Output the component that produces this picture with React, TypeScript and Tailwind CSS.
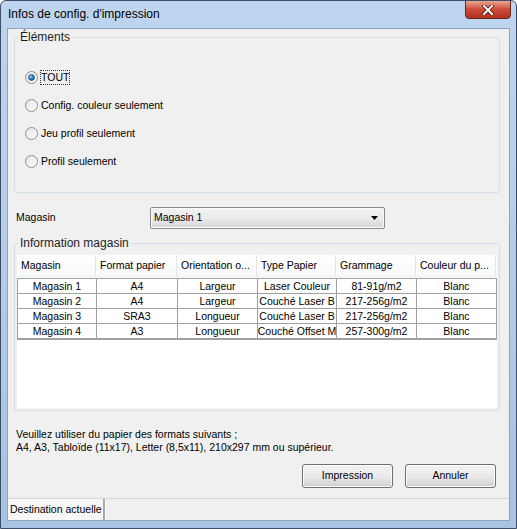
import React from "react";

const font = { fontFamily: '"Liberation Sans", Arial, sans-serif' };

const columns = [
  { label: "Magasin", w: "w-[79px]" },
  { label: "Format papier", w: "w-[81px]" },
  { label: "Orientation o...", w: "w-[80px]" },
  { label: "Type Papier", w: "w-[79px]" },
  { label: "Grammage", w: "w-[80px]" },
  { label: "Couleur du p...", w: "w-[80px]" },
];

const rows = [
  ["Magasin 1", "A4", "Largeur", "Laser Couleur", "81-91g/m2", "Blanc"],
  ["Magasin 2", "A4", "Largeur", "Couché Laser B", "217-256g/m2", "Blanc"],
  ["Magasin 3", "SRA3", "Longueur", "Couché Laser B", "217-256g/m2", "Blanc"],
  ["Magasin 4", "A3", "Longueur", "Couché Offset M", "257-300g/m2", "Blanc"],
];

const options = ["TOUT", "Config. couleur seulement", "Jeu profil seulement", "Profil seulement"];

function Radio({ checked }: { checked?: boolean }) {
  return (
    <span className="w-[13px] h-[13px] rounded-full border border-[#8f8f8f] bg-gradient-to-br from-[#e6e6e6] to-[#fbfbfb] flex items-center justify-center shrink-0">
      {checked && (
        <span className="w-[7px] h-[7px] rounded-full bg-[radial-gradient(circle_at_35%_35%,#9fd3f7,#1c6fb8_60%,#0d4a86)] border border-[#26598a]" />
      )}
    </span>
  );
}

function GroupBox({ title, className, children }: { title: string; className: string; children: React.ReactNode }) {
  return (
    <div className={"relative border border-[#d5dfe5] rounded-[3px] " + className}>
      <span className="absolute -top-[8px] left-[3px] px-[2px] bg-[#f0f0f0] text-[12px] leading-[14px] text-[#1e1e1e]">
        {title}
      </span>
      {children}
    </div>
  );
}

function Button({ label }: { label: string }) {
  return (
    <button className="w-[91px] h-[24px] rounded-[3px] border border-[#707070] bg-gradient-to-b from-[#f2f2f2] via-[#ebebeb] to-[#cfcfcf] text-[10.5px] text-black shadow-[inset_0_0_0_1px_#fcfcfc]">
      {label}
    </button>
  );
}

export default function App() {
  return (
    <div
      className="w-[517px] h-[529px] flex flex-col rounded-t-[6px] border border-[#3c4f66] bg-gradient-to-b from-[#bdd5ee] via-[#b3cde9] to-[#a6c3e4] overflow-hidden"
      style={font}
    >
      {/* title bar */}
      <div className="h-[27px] flex items-start relative shrink-0">
        <span className="ml-[7px] mt-[6px] text-[12px] leading-[14px] text-black">Infos de config. d'impression</span>
        <div className="absolute top-[-1px] right-[5px] w-[46px] h-[19px] rounded-b-[4px] border border-[#5e2a22] bg-gradient-to-b from-[#e8a493] via-[#cc4a36] to-[#b3301f] flex items-center justify-center">
          <svg width="12" height="10" viewBox="0 0 12 10">
            <path d="M2 1 L10 9 M10 1 L2 9" stroke="#3b1b16" strokeWidth="3.6" strokeLinecap="square" />
            <path d="M2 1 L10 9 M10 1 L2 9" stroke="#ffffff" strokeWidth="2" strokeLinecap="square" />
          </svg>
        </div>
      </div>

      {/* client area */}
      <div className="mx-[6px] mb-[7px] flex-1 border border-[#8da2bd] bg-[#f0f0f0] flex flex-col text-[10.5px] text-black">
        <GroupBox title="Éléments" className="mt-[8px] ml-[6px] w-[486px] h-[156px]">
          <div className="pt-[25px] pl-[10px] flex flex-col">
            {options.map((o, i) => (
              <div key={o} className="h-[28px] flex items-center gap-[3px]">
                <Radio checked={i === 0} />
                <span className={i === 0 ? "outline outline-1 outline-dotted outline-[#333] leading-[13px]" : "leading-[13px]"}>{o}</span>
              </div>
            ))}
          </div>
        </GroupBox>

        <div className="mt-[14px] ml-[8px] flex items-center h-[22px]">
          <span className="w-[134px]">Magasin</span>
          <div className="w-[235px] h-[22px] rounded-[2px] border border-[#8a8a8a] bg-gradient-to-b from-[#f2f2f2] via-[#ebebeb] to-[#d6d6d6] flex items-center justify-between pl-[3px] pr-[6px] shadow-[inset_0_0_0_1px_#fafafa]">
            <span>Magasin 1</span>
            <svg width="7" height="4" viewBox="0 0 7 4">
              <path d="M0 0 H7 L3.5 4 Z" fill="#000" />
            </svg>
          </div>
        </div>

        <GroupBox title="Information magasin" className="mt-[14px] ml-[6px] w-[486px] h-[168px]">
          <div className="mt-[11px] mx-[2px] h-[153px] bg-white">
            <div className="flex h-[22px] bg-gradient-to-b from-white to-[#f7f8fa] border-b border-[#f0f0f0]">
              {columns.map((c) => (
                <div key={c.label} className={c.w + " flex items-center pl-[4px] pt-[1px] border-r border-[#e5e5e5] whitespace-nowrap overflow-hidden"}>
                  {c.label}
                </div>
              ))}
            </div>
            <div className="mt-[1px] border-t border-l border-[#a0a0a0] w-[480px] shadow-[0_1px_0_#a0a0a0]">
              {rows.map((r, ri) => (
                <div key={ri} className="flex h-[15px] border-b border-[#a0a0a0]">
                  {r.map((cell, ci) => (
                    <div key={ci} className={columns[ci].w + " flex items-center justify-center border-r border-[#a0a0a0] whitespace-nowrap overflow-hidden leading-[13px]"}>
                      {cell}
                    </div>
                  ))}
                </div>
              ))}
            </div>
          </div>
        </GroupBox>

        <div className="mt-[17px] ml-[8px] leading-[13px]">
          <div>Veuillez utiliser du papier des formats suivants ;</div>
          <div>A4, A3, Tabloïde (11x17), Letter (8,5x11), 210x297 mm ou supérieur.</div>
        </div>

        <div className="mt-[10px] mr-[13px] flex justify-end gap-[12px]">
          <Button label="Impression" />
          <Button label="Annuler" />
        </div>

        <div className="mt-auto h-[22px] flex border-t border-[#d7d7d7] bg-[#f0f0f0]">
          <div className="w-[97px] flex items-center pl-[2px] border-r-2 border-[#a8a8a8] bg-[#f7f7f7] whitespace-nowrap">
            Destination actuelle
          </div>
          <div className="flex-1 border-l border-white" />
        </div>
      </div>
    </div>
  );
}
